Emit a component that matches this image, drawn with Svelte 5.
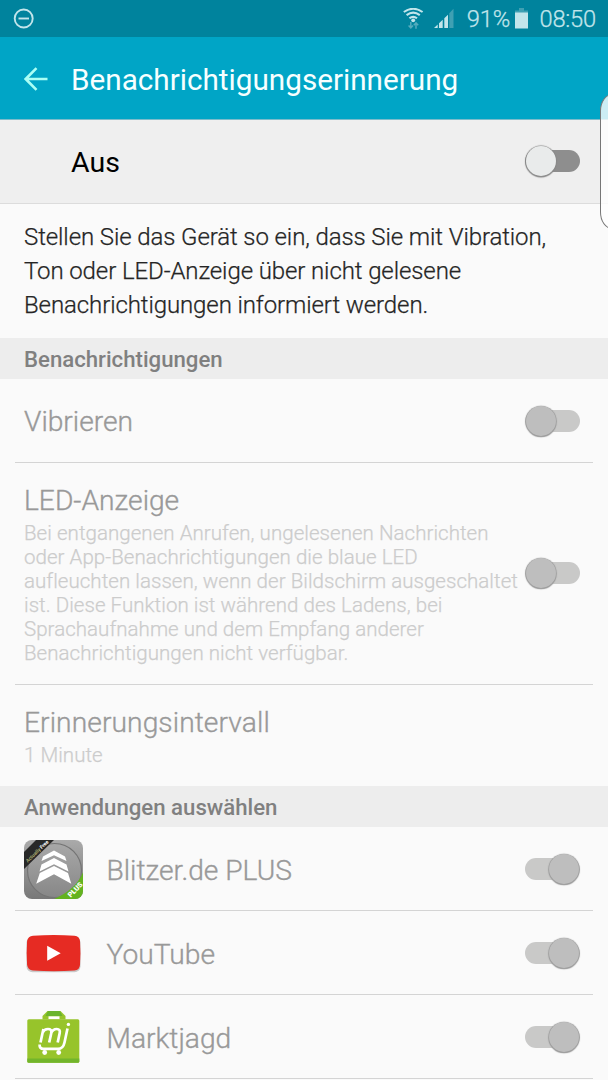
<script lang="ts">
  let reminder = $state(false)

  let settings = $state([
    { title: 'Vibrieren', on: false, lines: [] as string[], toggle: true },
    {
      title: 'LED-Anzeige',
      on: false,
      toggle: true,
      lines: [
        'Bei entgangenen Anrufen, ungelesenen Nachrichten',
        'oder App-Benachrichtigungen die blaue LED',
        'aufleuchten lassen, wenn der Bildschirm ausgeschaltet',
        'ist. Diese Funktion ist während des Ladens, bei',
        'Sprachaufnahme und dem Empfang anderer',
        'Benachrichtigungen nicht verfügbar.'
      ]
    },
    { title: 'Erinnerungsintervall', on: false, lines: ['1 Minute'], toggle: false }
  ])

  const apps = [
    { id: 'blitzer', name: 'Blitzer.de PLUS' },
    { id: 'youtube', name: 'YouTube' },
    { id: 'marktjagd', name: 'Marktjagd' }
  ]
</script>

{#snippet toggle(on: boolean, disabled: boolean)}
  <span class="switch" class:on class:disabled><span class="thumb"></span></span>
{/snippet}

<div class="screen">
  <div class="statusbar">
    <svg class="dnd" width="22" height="22" viewBox="0 0 22 22">
      <circle cx="10.700" cy="10.500" r="9" />
      <path d="M5.500 10.500h10.500" />
    </svg>
    <span class="spacer"></span>
    <svg class="wifi" width="21" height="22" viewBox="0 0 21 22">
      <path class="arc" d="M.8 4Q10.200-2.400 19.600 4M3.600 7.200Q10.200 2.200 16.800 7.200M6.400 10.300Q10.200 7.300 14 10.300" />
      <circle cx="10.200" cy="12.300" r="1.900" />
      <path class="data" d="M7.800 14v6M5.600 17.600l2.200 2.400 2.200-2.400M13 20.700v-6M10.800 17.200l2.200-2.400 2.200 2.400" />
    </svg>
    <svg class="signal" width="20" height="21" viewBox="0 0 20 21">
      <path d="M0 20L3.700 16.500V20zM5 15.200l3.700-3.500V20H5zM10.300 10.200L14 6.700V20h-3.700z" />
      <path class="dim" d="M15.300 5.200L19.500.8V20h-4.200z" />
    </svg>
    <span class="percent">91%</span>
    <svg class="battery" width="13" height="22" viewBox="0 0 13 22">
      <path class="dim" d="M4 0h5v2.500h4V6H0V2.500h4z" />
      <path d="M0 4.500h13V20.500H0z" />
    </svg>
    <span class="clock">08:50</span>
  </div>

  <header>
    <svg width="24" height="24" viewBox="0 0 24 24">
      <path d="M23.500 12H2M12.500 1.200L1.700 12l10.800 10.800" />
    </svg>
    <h1>Benachrichtigungserinnerung</h1>
  </header>

  <div class="master">
    <span class="state">Aus</span>
    {@render toggle(reminder, false)}
  </div>

  <p class="intro">
    Stellen Sie das Gerät so ein, dass Sie mit Vibration,<br />
    Ton oder LED-Anzeige über nicht gelesene<br />
    Benachrichtigungen informiert werden.
  </p>

  <h2>Benachrichtigungen</h2>
  {#each settings as item, i}
    <div class="row setting s{i}">
      <div class="label">
        <span class="title">{item.title}</span>
        {#each item.lines as line}
          <span class="sub">{line}</span>
        {/each}
      </div>
      {#if item.toggle}
        {@render toggle(item.on, true)}
      {/if}
    </div>
  {/each}

  <h2>Anwendungen auswählen</h2>
  {#each apps as app}
    <div class="row app">
      <svg class="icon" width="60" height="60" viewBox="0 0 60 60">
        {#if app.id === 'blitzer'}
          <defs>
            <linearGradient id="steel" x1="0" y1="0" x2="0" y2="1">
              <stop offset="0" stop-color="#aaaaaa" />
              <stop offset="1" stop-color="#777777" />
            </linearGradient>
            <linearGradient id="disc" x1="0" y1="0" x2="0" y2="1">
              <stop offset="0" stop-color="#a8a8a8" />
              <stop offset="1" stop-color="#878787" />
            </linearGradient>
            <clipPath id="tile"><rect x="0" y="0" width="59" height="59" rx="8" /></clipPath>
          </defs>
          <g clip-path="url(#tile)">
            <rect width="60" height="60" fill="url(#steel)" />
            <circle cx="30.500" cy="30.500" r="27" fill="url(#disc)" stroke="#747474" stroke-width="1.200" />
            <path d="M60 29.500Q54 49 29 59.500H60z" fill="#63b31f" />
            <path d="M0 12L12 0H30L0 29z" fill="#282828" />
          </g>
          <text class="ribbon" transform="translate(3.800 22.800) rotate(-44)"><tspan fill="#a5a56c">Actually</tspan> Free</text>
          <text class="plus" transform="translate(46.800 57.800) rotate(-46)">PLUS</text>
          <g fill="#fff">
            <path d="M30 10.500L41 16.500 42.500 21 30 15.300 17.500 21 19 16.500z" />
            <path d="M30 18L42.500 24.500 44.500 31.500 30 24.300 15.500 31.500 17.500 24.500z" />
            <path d="M30 26L44 33 47.300 43.700 30 34.200 12.200 43.700 15.800 33z" />
          </g>
        {:else if app.id === 'youtube'}
          <rect x="2.500" y="12.700" width="54" height="35.500" rx="6" fill="#c9c9c9" />
          <path d="M9 11.700Q30 10.400 50.500 11.700 55.500 12.200 56 17 56.900 29 56 41 55.500 46 50.500 46.500 30 47.800 9 46.500 4 46 3.100 41 2.200 29 3.100 17 4 12.200 9 11.700z" fill="#e62b23" />
          <path d="M23.200 21.700L36.700 29.200 23.200 36.700z" fill="#fff" />
        {:else}
          <g transform="translate(0 -4.500)">
            <path d="M18.500 16V12.500L23.500 7.500h13L41.500 12.500V16z" fill="#97c42b" />
            <path d="M24 7.500h12l2.500 5h-17z" fill="#6ab42d" />
            <rect x="24.500" y="12.800" width="11" height="3" fill="#fff" />
            <rect x="3.300" y="15.700" width="52" height="43.500" rx="1.500" fill="#97c42b" />
            <path d="M3.300 55h52v2.900q0 1.300-1.500 1.300H4.800q-1.500 0-1.500-1.300z" fill="#72b52b" />
            <path class="cart" d="M16.500 39L19.400 25.500M18.700 29Q20.200 25.500 24 25.500 28 25.500 27.300 29.500L25.200 39M27 30Q28.800 25.500 32.800 25.500 36.500 25.500 35.700 29.500L33.700 39M43.500 25L40.500 39Q39.200 45.300 34 45.300H19.500Q15.300 45.300 15.600 41" />
            <circle cx="44.400" cy="20.900" r="1.700" fill="#fff" />
            <circle cx="20.700" cy="49" r="2.400" fill="#fff" />
            <circle cx="34.700" cy="49" r="2.400" fill="#fff" />
          </g>
        {/if}
      </svg>
      <span class="title">{app.name}</span>
      {@render toggle(true, true)}
    </div>
  {/each}

  <div class="edge-handle"></div>
</div>

<style>
  :global(body) {
    margin: 0;
  }

  .screen {
    position: relative;
    width: 608px;
    height: 1080px;
    overflow: hidden;
    background: #fafafa;
    font-family: Roboto, sans-serif;
    white-space: nowrap;
  }

  .statusbar {
    display: flex;
    align-items: center;
    box-sizing: border-box;
    height: 37px;
    padding: 0 12px 0 13px;
    background: #00839d;
    color: #c2e5eb;
    font-size: 23.7px;
    font-weight: 300;
    letter-spacing: -0.2px;
    -webkit-text-stroke: 0.25px;
  }

  .statusbar svg {
    flex: none;
    fill: #c2e5eb;
  }

  .statusbar .dim {
    fill: #3fa0b3;
  }

  .statusbar .dnd {
    fill: none;
    stroke: #c2e5eb;
    stroke-width: 1.9;
  }

  .spacer {
    flex: 1;
  }

  .wifi .arc {
    fill: none;
    stroke: #c2e5eb;
    stroke-width: 2.1;
  }

  .wifi .data {
    fill: none;
    stroke: #55acbd;
    stroke-width: 1.5;
  }

  .signal {
    margin: 0 13px 0 9.5px;
  }

  .percent,
  .clock {
    padding-top: 1px;
  }

  .battery {
    margin: 0 11.5px 0 5px;
  }

  header {
    display: flex;
    align-items: center;
    box-sizing: border-box;
    height: 83px;
    padding: 2px 0 0 24px;
    gap: 23px;
    background: #00a5c6;
    border-bottom: 1px solid #7cbccb;
  }

  header svg {
    margin-top: -1px;
  }

  header path {
    fill: none;
    stroke: #aafff5;
    stroke-width: 2.6;
  }

  h1 {
    margin: 0;
    color: #f6ffff;
    font-size: 29.7px;
    font-weight: 400;
  }

  .master {
    display: flex;
    align-items: center;
    justify-content: space-between;
    box-sizing: border-box;
    height: 84px;
    padding: 0 28px 1px 71px;
    background: #efefef;
    border-bottom: 1px solid #dcdcdc;
    color: #000;
    font-size: 28.5px;
  }

  .state {
    padding-top: 2px;
  }

  .intro {
    box-sizing: border-box;
    height: 133.5px;
    margin: 0;
    padding: 17px 24px 0;
    color: #252525;
    font-size: 24px;
    font-weight: 300;
    letter-spacing: -0.1px;
    line-height: 33.9px;
    -webkit-text-stroke: 0.25px;
  }

  h2 {
    height: 41px;
    margin: 0;
    padding-left: 24px;
    background: #ededed;
    color: #808080;
    font-size: 22.2px;
    font-weight: 500;
    line-height: 43px;
  }

  .row {
    display: flex;
    align-items: center;
    box-sizing: border-box;
    height: 84px;
    margin: 0 15px;
    padding: 0 13px 0 9px;
    border-bottom: 1px solid #d4d4d4;
  }

  .title {
    color: #999;
    font-size: 28.2px;
    font-weight: 300;
    line-height: 40px;
    -webkit-text-stroke: 0.35px;
  }

  .label {
    display: flex;
    flex: 1;
    flex-direction: column;
    width: 0;
  }

  .s0 {
    padding-top: 1px;
  }

  .s0 .label {
    padding-top: 2px;
  }

  .s1 {
    height: 222px;
  }

  .s1 .label,
  .s2 .label {
    margin-top: -1px;
  }

  .s2 {
    height: 101.5px;
    border-bottom: 0;
  }

  .s2 .title {
    letter-spacing: 0.08px;
  }

  .sub {
    color: #ccc;
    font-size: 20.5px;
    font-weight: 300;
    letter-spacing: 0.04px;
    line-height: 24px;
    -webkit-text-stroke: 0.25px;
  }

  .app {
    padding-left: 8.5px;
    padding-right: 13.5px;
  }

  .app .title {
    flex: 1;
    margin-left: 23px;
    padding-top: 4px;
  }

  .icon {
    flex: none;
    margin-top: 2px;
    overflow: visible;
  }

  .ribbon {
    fill: #fff;
    font-size: 5px;
    font-weight: 700;
  }

  .plus {
    fill: #fff;
    font-size: 7.2px;
    font-weight: 900;
  }

  .cart {
    fill: none;
    stroke: #fff;
    stroke-width: 2.7;
    stroke-linejoin: round;
  }

  .switch {
    display: flex;
    align-items: center;
    flex: none;
    width: 55px;
    height: 22px;
    border-radius: 11px;
    background: #8e8e8e;
  }

  .switch.on {
    justify-content: flex-end;
  }

  .switch.disabled {
    background: #c9c9c8;
  }

  .thumb {
    width: 30px;
    height: 30px;
    margin-left: 0.5px;
    border-radius: 50%;
    background: #e9ebeb;
    box-shadow: 0 0.5px 1px 1px #888;
  }

  .disabled .thumb {
    background: #bebebe;
    box-shadow: 0 0.5px 1px 0.8px #999;
  }

  .on .thumb {
    margin-right: 0.5px;
  }

  /* side panel grip that sticks out over the right screen border */
  .edge-handle {
    position: absolute;
    top: 94px;
    right: -19px;
    box-sizing: border-box;
    width: 27px;
    height: 135px;
    border: 1px solid #777;
    border-radius: 12px / 17px;
    background: rgba(255, 255, 255, 0.8);
  }
</style>
